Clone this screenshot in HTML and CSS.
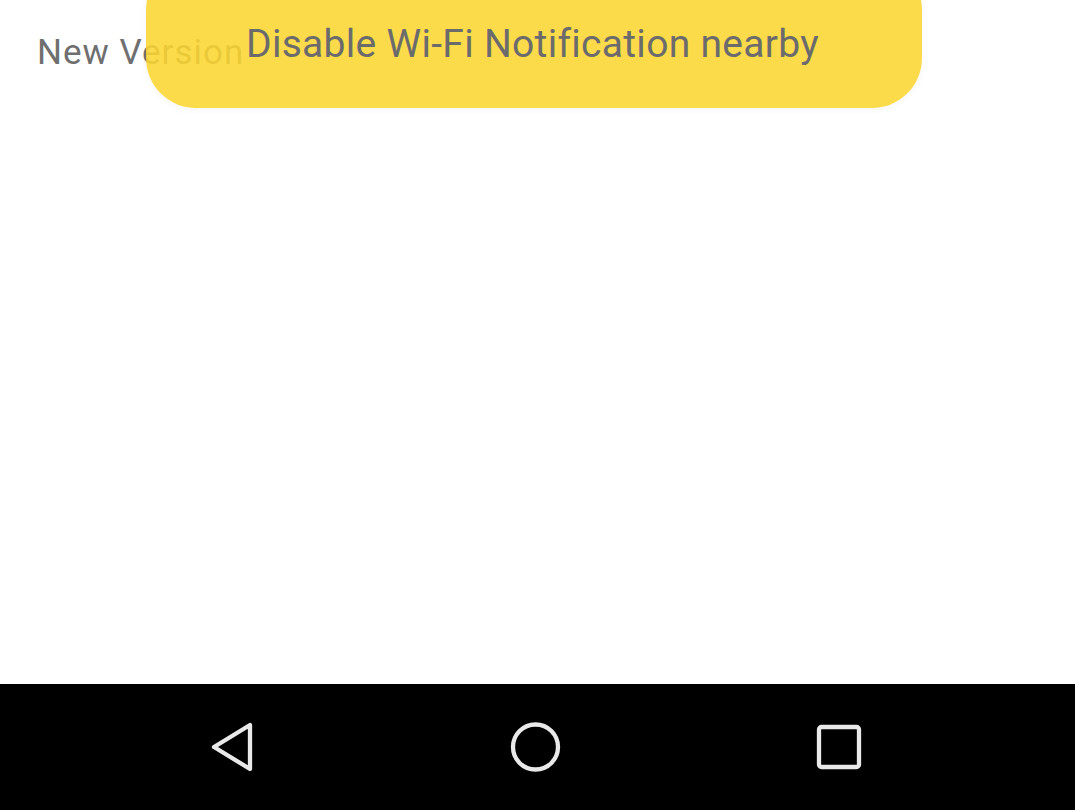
FILE: index.html
```html
<!DOCTYPE html>
<html>
<head>
<meta charset="utf-8">
<link rel="stylesheet" href="styles.css">
</head>
<body>
<div class="screen">
  <main class="content">
    <div class="title">New Version</div>
  </main>
  <div class="toast">Disable Wi-Fi Notification nearby</div>
  <nav class="navbar">
    <svg class="nav-icon" width="60" height="60" viewBox="0 0 60 60">
      <path d="M49 8 L49 52 L13 30 Z" fill="none" stroke="#e9e9e9" stroke-width="4.3" stroke-linejoin="round"/>
    </svg>
    <svg class="nav-icon" width="60" height="60" viewBox="0 0 60 60">
      <circle cx="30.5" cy="30" r="22.5" fill="none" stroke="#e9e9e9" stroke-width="4.3"/>
    </svg>
    <svg class="nav-icon" width="60" height="60" viewBox="0 0 60 60">
      <rect x="10" y="10" width="40" height="40" rx="2.5" fill="none" stroke="#e9e9e9" stroke-width="4.3"/>
    </svg>
  </nav>
</div>
</body>
</html>
```

FILE: styles.css
```css
html, body {
  margin: 0;
  padding: 0;
  background: #ffffff;
}
.screen {
  position: relative;
  width: 1075px;
  height: 810px;
  display: flex;
  flex-direction: column;
  overflow: hidden;
  font-family: Roboto, "Noto Sans", sans-serif;
}
.content {
  flex: 1;
  padding: 33px 0 0 37px;
}
.title {
  font-size: 35px;
  letter-spacing: 1px;
  color: #6f6f6f;
  line-height: 40px;
}
.toast {
  position: absolute;
  top: -40px;
  left: 146px;
  width: 776px;
  height: 148px;
  box-sizing: border-box;
  border-radius: 50px;
  background: rgba(252, 214, 50, 0.88);
  box-shadow: 0 2px 8px rgba(0, 0, 0, 0.04);
  color: #6b6b6b;
  font-size: 39px;
  letter-spacing: 0.3px;
  line-height: 44px;
  padding: 62px 0 0 100px;
}
.navbar {
  height: 126px;
  background: #000000;
  display: flex;
  align-items: center;
  justify-content: space-between;
  padding: 0 206px 0 201px;
}
.nav-icon {
  display: block;
}
```
